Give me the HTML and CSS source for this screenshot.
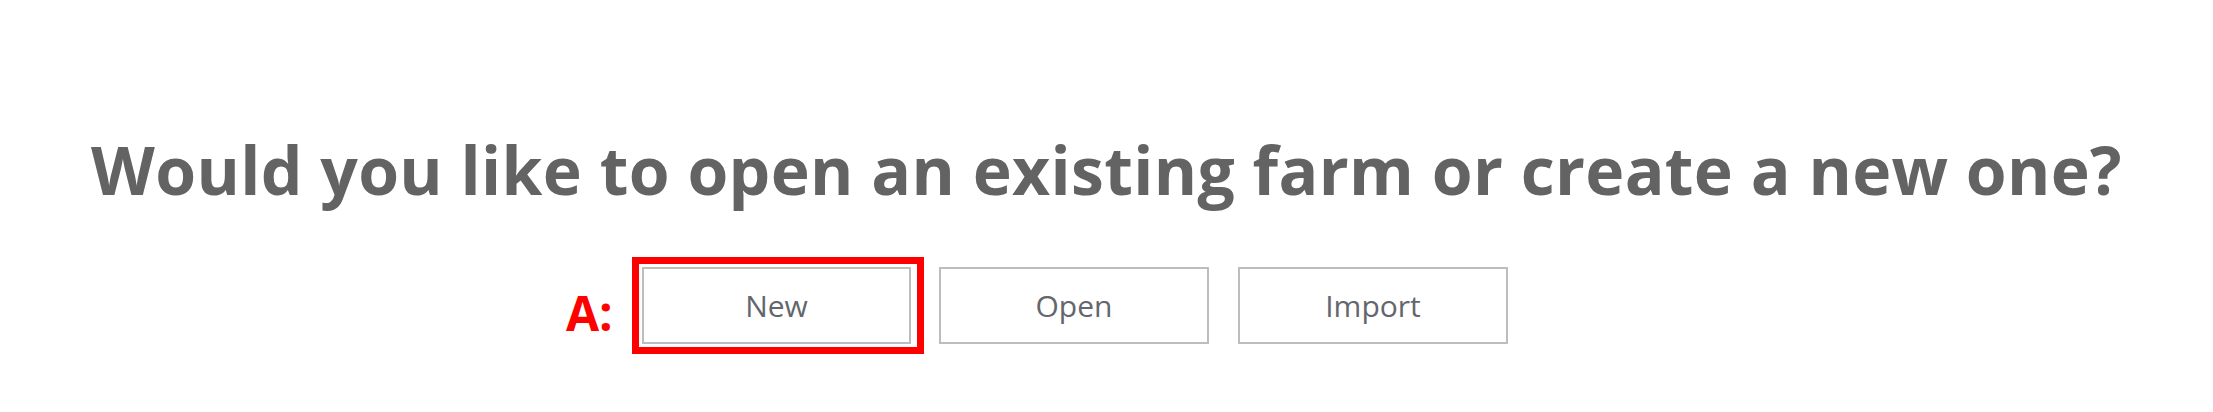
FILE: index.html
```html
<!DOCTYPE html>
<html lang="en">
<head>
<meta charset="utf-8">
<title>Open or create a farm</title>
<link rel="stylesheet" href="styles.css">
</head>
<body>
<main class="page">
  <h1 class="question">Would you like to open an existing farm or create a new one?</h1>
  <div class="choices">
    <span class="marker">A:</span>
    <div class="highlight">
      <button class="btn" type="button">New</button>
    </div>
    <button class="btn btn-open" type="button">Open</button>
    <button class="btn btn-import" type="button">Import</button>
  </div>
</main>
</body>
</html>
```

FILE: styles.css
```css
html, body {
  margin: 0;
  padding: 0;
  background: #ffffff;
}

.page {
  width: 2213px;
  height: 412px;
  padding-top: 136px;
  box-sizing: border-box;
  font-family: "Open Sans", "Noto Sans", sans-serif;
}

.question {
  margin: 0;
  padding-left: 0;
  font-size: 66px;
  line-height: 66px;
  font-weight: 700;
  color: #636363;
  text-align: center;
  white-space: nowrap;
  letter-spacing: 0.35px;
}

.choices {
  display: flex;
  align-items: flex-start;
  margin-top: 55px;
  padding-left: 566px;
}

.marker {
  width: 45px;
  margin-top: 32px;
  margin-right: 21px;
  font-size: 48px;
  line-height: 48px;
  font-weight: 700;
  color: #ff0000;
  white-space: nowrap;
}

.highlight {
  display: flex;
  border: 7px solid #ff0000;
  padding: 3px 6px 3px 3px;
}

.btn {
  width: 270px;
  height: 77px;
  box-sizing: border-box;
  border: 2px solid #bdbdbd;
  background: #ffffff;
  font-family: "Open Sans", "Noto Sans", sans-serif;
  font-size: 30px;
  color: #63666c;
  padding: 0;
  margin: 0;
}

.highlight .btn {
  width: 269px;
}

.btn-open {
  margin-top: 10px;
  margin-left: 15px;
}

.btn-import {
  margin-top: 10px;
  margin-left: 29px;
}
```
